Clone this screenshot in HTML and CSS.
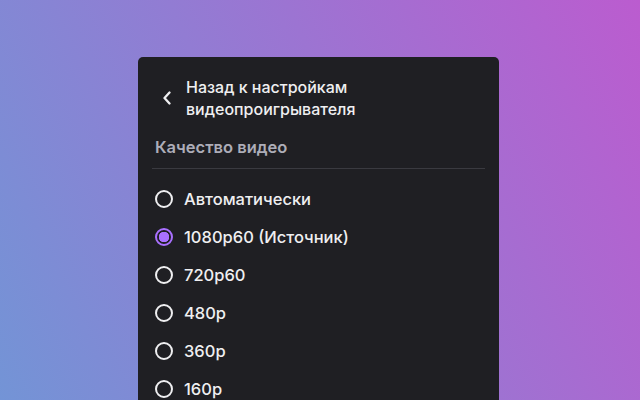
FILE: index.html
```html
<!DOCTYPE html>
<html lang="ru">
<head>
<meta charset="utf-8">
<link rel="stylesheet" href="styles.css">
</head>
<body>
<div class="panel">
  <div class="back">
    <span class="chev">
      <svg width="10" height="14" viewBox="0 0 10 14"><path d="M7.5 1.5 L2.5 7 L7.5 12.5" fill="none" stroke="#efeff1" stroke-width="2.3" stroke-linecap="round" stroke-linejoin="round"/></svg>
    </span>
    <span class="back-text">Назад к настройкам<br>видеопроигрывателя</span>
  </div>
  <div class="section-title">Качество видео</div>
  <div class="divider"></div>
  <div class="list">
    <div class="row"><span class="radio"></span><span class="label">Автоматически</span></div>
    <div class="row"><span class="radio checked"></span><span class="label">1080p60 (Источник)</span></div>
    <div class="row"><span class="radio"></span><span class="label">720p60</span></div>
    <div class="row"><span class="radio"></span><span class="label">480p</span></div>
    <div class="row"><span class="radio"></span><span class="label">360p</span></div>
    <div class="row"><span class="radio"></span><span class="label">160p</span></div>
  </div>
</div>
</body>
</html>
```
FILE: styles.css
```css
html, body {
  margin: 0;
  height: 100%;
  overflow: hidden;
}
body {
  background: linear-gradient(65deg, #7394d6 0%, #bb5ccf 100%);
  font-family: Inter, "Noto Sans", sans-serif;
  color: #efeff1;
}
.panel {
  width: 361px;
  margin: 57px 0 0 138px;
  height: 360px;
  background: #1f1f23;
  border-radius: 5px 5px 0 0;
  padding: 0 14px;
  box-sizing: border-box;
}
.back {
  display: flex;
  align-items: center;
  padding-top: 19px;
}
.chev {
  width: 30px;
  display: flex;
  justify-content: center;
  margin-right: 4px;
}
.chev svg { display: block; }
.back-text {
  font-size: 16px;
  line-height: 22px;
  font-weight: 500;
}
.section-title {
  margin-top: 16px;
  padding-left: 3px;
  font-size: 16.5px;
  line-height: 22px;
  font-weight: 600;
  color: #adadb8;
}
.divider {
  margin-top: 10px;
  height: 1px;
  background: #3a3a40;
}
.list {
  padding-top: 11px;
}
.row {
  height: 38px;
  display: flex;
  align-items: center;
  padding-left: 3px;
}
.radio {
  width: 18px;
  height: 18px;
  box-sizing: border-box;
  border: 2px solid #efeff1;
  border-radius: 50%;
  margin-right: 11px;
  flex: none;
}
.radio.checked {
  border-color: #a970ff;
  background: radial-gradient(circle, #a970ff 0 5px, #1f1f23 5.5px);
}
.label {
  font-size: 16.5px;
  font-weight: 500;
  line-height: 22px;
}
```
